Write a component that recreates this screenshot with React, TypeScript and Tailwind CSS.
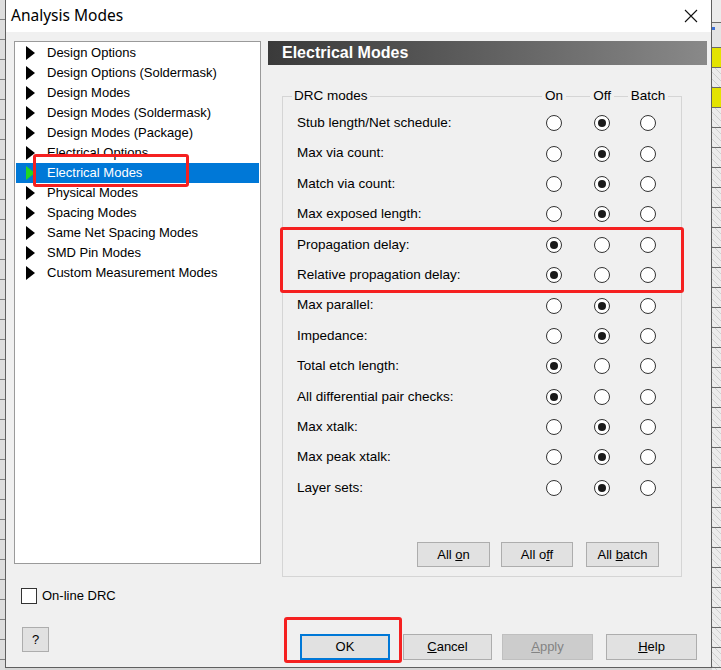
import React from "react";

const treeItems = [
  "Design Options",
  "Design Options (Soldermask)",
  "Design Modes",
  "Design Modes (Soldermask)",
  "Design Modes (Package)",
  "Electrical Options",
  "Electrical Modes",
  "Physical Modes",
  "Spacing Modes",
  "Same Net Spacing Modes",
  "SMD Pin Modes",
  "Custom Measurement Modes",
];

const rows: [string, number][] = [
  ["Stub length/Net schedule:", 1],
  ["Max via count:", 1],
  ["Match via count:", 1],
  ["Max exposed length:", 1],
  ["Propagation delay:", 0],
  ["Relative propagation delay:", 0],
  ["Max parallel:", 1],
  ["Impedance:", 1],
  ["Total etch length:", 0],
  ["All differential pair checks:", 0],
  ["Max xtalk:", 1],
  ["Max peak xtalk:", 1],
  ["Layer sets:", 1],
];

function Radio({ on }: { on: boolean }) {
  return (
    <div className="flex justify-center">
      <div className="w-[16px] h-[16px] rounded-full border border-[#333333] bg-white flex items-center justify-center">
        {on && <div className="w-[8px] h-[8px] rounded-full bg-[#1a1a1a]" />}
      </div>
    </div>
  );
}

function Seg({ cls = "" }: { cls?: string }) {
  return <div className={`self-end h-[8px] border-t border-[#d5d5d5] ${cls}`} />;
}

function ColLabel({ text }: { text: string }) {
  return (
    <div className="flex h-[16px] items-center">
      <Seg cls="flex-1" />
      <span className="px-[3px] leading-[16px]">{text}</span>
      <Seg cls="flex-1" />
    </div>
  );
}

function Triangle({ color }: { color: string }) {
  return (
    <svg width="9" height="14" viewBox="0 0 9 14" className="shrink-0">
      <polygon points="0,0 9,7 0,14" fill={color} />
    </svg>
  );
}

function Btn({
  children,
  w,
  cls = "",
}: {
  children: React.ReactNode;
  w: string;
  cls?: string;
}) {
  return (
    <div
      className={`${w} h-[25px] flex items-center justify-center bg-[#e1e1e1] border border-[#adadad] text-[13px] text-black ${cls}`}
    >
      {children}
    </div>
  );
}

export default function App() {
  const rightCells = Array.from({ length: 29 });
  return (
    <div
      className="relative w-[721px] h-[670px] overflow-hidden flex bg-[#d6d6d6]"
      style={{ fontFamily: '"Liberation Sans", Arial, sans-serif' }}
    >
      {/* left background strip */}
      <div className="w-[5px] h-full shrink-0 bg-[image:repeating-linear-gradient(to_bottom,#dedede_0px,#dedede_19px,#808080_19px,#808080_20px)]" />

      {/* window */}
      <div className="w-[707px] h-[668px] shrink-0 flex flex-col border-x border-b border-[#5f5f5f] bg-[#f0f0f0]">
        {/* title bar */}
        <div className="h-[32px] shrink-0 bg-white flex items-center justify-between pl-[5px] pr-[13px]">
          <span
            className="text-[15.5px] text-black"
            style={{ fontFamily: '"Noto Sans", "Open Sans", sans-serif' }}
          >
            Analysis Modes
          </span>
          <svg width="14" height="14" viewBox="0 0 14 14">
            <path d="M1 1 L13 13 M13 1 L1 13" stroke="#111" strokeWidth="1.1" />
          </svg>
        </div>

        {/* body */}
        <div className="flex-1 flex pt-[9px] pl-[8px]">
          {/* left column */}
          <div className="w-[247px] shrink-0 flex flex-col">
            <div className="h-[523px] bg-white border border-[#9a9a9a] pt-[1px] text-[13px]">
              {treeItems.map((t) => {
                const sel = t === "Electrical Modes";
                return (
                  <div
                    key={t}
                    className={`h-[20px] mx-[1px] flex items-center pl-[10px] ${
                      sel ? "bg-[#0078d7] text-white" : "text-black"
                    }`}
                  >
                    <Triangle color={sel ? "#22d622" : "#000"} />
                    <span className="ml-[12px] whitespace-nowrap">{t}</span>
                  </div>
                );
              })}
            </div>
            <div className="mt-[24px] flex items-center ml-[7px] h-[16px]">
              <div className="w-[16px] h-[16px] border border-[#333333] bg-white" />
              <span className="ml-[5px] text-[13px] text-black">On-line DRC</span>
            </div>
            <div className="mt-[23px] ml-[8px] w-[27px] h-[25px] bg-[#e1e1e1] border border-[#adadad] flex items-center justify-center text-[13px] text-black">
              ?
            </div>
          </div>

          {/* right column */}
          <div className="w-[439px] shrink-0 ml-[7px] flex flex-col">
            <div className="h-[24px] bg-linear-to-r from-[#3a3a3a] to-[#898989] flex items-center pl-[14px]">
              <span className="text-white font-bold text-[16px]">Electrical Modes</span>
            </div>

            {/* group box */}
            <div className="mt-[23px] ml-[14px] w-[400px] text-[13.5px] text-black">
              <div className="grid grid-cols-[1fr_48px_48px_44px_12px] h-[16px]">
                <div className="flex h-[16px] items-center">
                  <Seg cls="w-[10px] border-l" />
                  <span className="px-[2px] leading-[16px]">DRC modes</span>
                  <Seg cls="flex-1" />
                </div>
                <ColLabel text="On" />
                <ColLabel text="Off" />
                <ColLabel text="Batch" />
                <div className="flex h-[16px]">
                  <Seg cls="flex-1 border-r" />
                </div>
              </div>
              <div className="border-x border-b border-[#d5d5d5] pt-[4px] pb-[9px]">
                {rows.map(([label, sel]) => (
                  <div
                    key={label}
                    className="grid grid-cols-[1fr_48px_48px_44px_11px] h-[30.4px] items-center"
                  >
                    <span className="pl-[14px]">{label}</span>
                    <Radio on={sel === 0} />
                    <Radio on={sel === 1} />
                    <Radio on={sel === 2} />
                    <div />
                  </div>
                ))}
                <div className="mt-[39px] flex justify-end pr-[22px]">
                  <Btn w="w-[73px]">
                    <span>
                      All <span className="underline">o</span>n
                    </span>
                  </Btn>
                  <Btn w="w-[72px]" cls="ml-[11px]">
                    <span>
                      All o<span className="underline">f</span>f
                    </span>
                  </Btn>
                  <Btn w="w-[73px]" cls="ml-[13px]">
                    <span>
                      All <span className="underline">b</span>atch
                    </span>
                  </Btn>
                </div>
              </div>
            </div>

            {/* dialog buttons */}
            <div className="mt-[57px] flex ml-[32px]">
              <div className="w-[90px] h-[26px] flex items-center justify-center bg-[#e1e1e1] border-2 border-[#0078d7] text-[13px] text-black">
                OK
              </div>
              <div className="ml-[13px] w-[89px] h-[26px] flex items-center justify-center bg-[#e1e1e1] border border-[#adadad] text-[13px] text-black">
                <span>
                  <span className="underline">C</span>ancel
                </span>
              </div>
              <div className="ml-[10px] w-[91px] h-[26px] flex items-center justify-center bg-[#cccccc] border border-[#bfbfbf] text-[13px] text-[#838383]">
                <span>
                  <span className="underline">A</span>pply
                </span>
              </div>
              <div className="ml-[13px] w-[91px] h-[26px] flex items-center justify-center bg-[#e1e1e1] border border-[#adadad] text-[13px] text-black">
                <span>
                  <span className="underline">H</span>elp
                </span>
              </div>
            </div>
          </div>
        </div>
      </div>

      {/* right background strip */}
      <div className="flex-1 h-full flex flex-col">
        <div className="h-[23px] shrink-0 bg-[#ececec] border-b border-[#6a6a6a]" />
        <div className="h-[25px] shrink-0 bg-[#e4e4e4] border-b border-[#6a6a6a] flex items-center">
          <div className="w-[3px] h-[3px] bg-[#3b6fd6] mt-[-14px]" />
        </div>
        <div className="h-[20px] shrink-0 bg-[#e3e300] border-b border-[#6a6a6a]" />
        <div className="h-[20px] shrink-0 bg-[image:repeating-linear-gradient(45deg,#cfcfcf_0px,#cfcfcf_1px,#ececec_1px,#ececec_5px)] border-b border-[#6a6a6a]" />
        <div className="h-[20px] shrink-0 bg-[#e3e300] border-b border-[#6a6a6a]" />
        {rightCells.map((_, i) => (
          <div
            key={i}
            className="h-[20px] shrink-0 bg-[image:repeating-linear-gradient(45deg,#cfcfcf_0px,#cfcfcf_1px,#ececec_1px,#ececec_5px)] border-b border-[#6a6a6a]"
          />
        ))}
      </div>

      {/* red annotation boxes */}
      <div className="absolute left-[33px] top-[154px] w-[156px] h-[33px] border-[3px] border-[#f52020] rounded-[3px] pointer-events-none" />
      <div className="absolute left-[280px] top-[227px] w-[404px] h-[66px] border-[3px] border-[#f52020] rounded-[3px] pointer-events-none" />
      <div className="absolute left-[284px] top-[617px] w-[118px] h-[46px] border-[3px] border-[#f52020] rounded-[3px] pointer-events-none" />
    </div>
  );
}
